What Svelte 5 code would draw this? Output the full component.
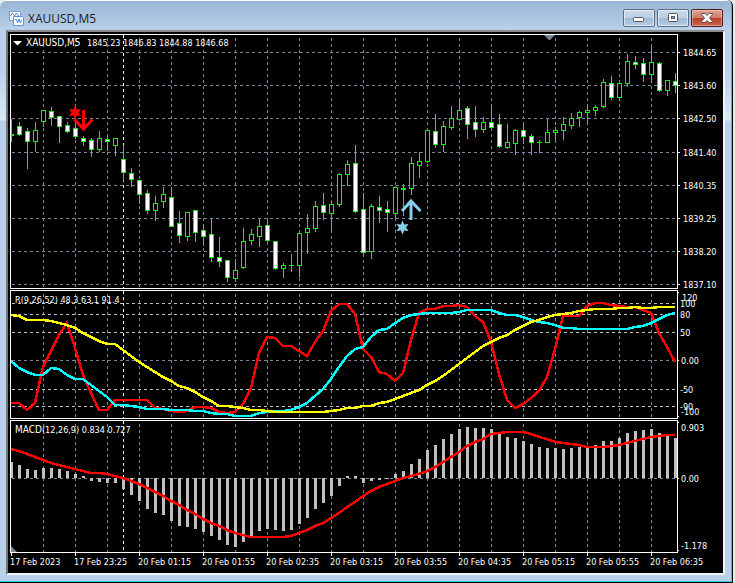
<script lang="ts">
    type Candle = [high: number, top: number, bottom: number, low: number, bear: number];

    // chart space: one bar every 8 units, y grows downwards
    const START = 11;
    const STEP = 8;
    const LEFT = 10;
    const RIGHT = 677;

    const panes = [
        { top: 34, bottom: 288 },
        { top: 290, bottom: 418 },
        { top: 420, bottom: 552 }
    ];

    const candles: Candle[] = [
        [119, 134, 136, 142, 0], [122, 126, 135, 136, 1], [128, 131, 142, 169, 1], [122, 130, 142, 152, 0],
        [110, 110, 122, 127, 0], [107, 111, 118, 126, 1], [116, 116, 127, 143, 1], [122, 125, 132, 133, 1],
        [124, 128, 137, 139, 1], [136, 138, 142, 146, 1], [138, 140, 150, 157, 1], [131, 138, 150, 152, 0],
        [136, 139, 142, 151, 1], [138, 138, 146, 156, 0], [145, 159, 173, 181, 1], [168, 173, 180, 187, 1],
        [180, 180, 195, 204, 1], [190, 193, 211, 214, 1], [196, 203, 211, 221, 0], [187, 194, 202, 208, 0],
        [187, 197, 227, 227, 1], [211, 223, 236, 243, 1], [212, 212, 237, 241, 0], [210, 210, 233, 242, 1],
        [225, 230, 237, 246, 1], [218, 234, 258, 262, 1], [237, 257, 262, 267, 1], [260, 260, 278, 282, 1],
        [259, 270, 279, 282, 0], [228, 241, 268, 269, 0], [229, 234, 241, 245, 0], [219, 226, 237, 247, 0],
        [221, 225, 241, 242, 1], [241, 241, 269, 270, 1], [263, 265, 269, 278, 0], [254, 265, 266, 272, 0],
        [233, 233, 266, 277, 0], [214, 228, 233, 254, 0], [201, 206, 229, 232, 0], [193, 205, 213, 220, 1],
        [201, 204, 214, 230, 0], [173, 174, 205, 207, 0], [160, 164, 175, 186, 0], [145, 163, 212, 213, 1],
        [193, 209, 253, 255, 1], [204, 206, 252, 259, 0], [196, 207, 211, 223, 1], [201, 209, 213, 232, 1],
        [186, 187, 214, 220, 0], [184, 188, 190, 216, 0], [157, 163, 189, 195, 0], [152, 161, 166, 178, 0],
        [130, 130, 162, 163, 0], [114, 131, 145, 148, 1], [121, 126, 145, 152, 0], [106, 118, 128, 130, 0],
        [100, 110, 120, 121, 0], [106, 108, 125, 139, 1], [106, 122, 130, 137, 1], [117, 122, 130, 133, 0],
        [105, 122, 128, 128, 1], [114, 124, 147, 148, 1], [124, 142, 148, 149, 0], [129, 130, 144, 155, 0],
        [125, 130, 137, 144, 1], [134, 136, 143, 155, 1], [140, 142, 143, 153, 0], [119, 132, 143, 143, 0],
        [127, 130, 133, 141, 0], [117, 124, 131, 140, 0], [113, 118, 126, 129, 0], [111, 112, 118, 127, 0],
        [105, 110, 113, 125, 0], [105, 107, 111, 116, 0], [79, 82, 107, 108, 0], [76, 83, 98, 100, 1],
        [82, 83, 98, 101, 0], [54, 61, 84, 87, 0], [56, 62, 65, 69, 1], [58, 63, 75, 82, 1],
        [47, 62, 75, 83, 0], [62, 63, 91, 92, 1], [80, 80, 91, 96, 0], [73, 81, 86, 93, 1]
    ];

    const fast = [
        403, 403, 410, 403, 367, 351, 335, 323, 348, 375, 393, 410, 410, 400, 400, 400, 400, 400, 408, 409, 411,
        412, 411, 407, 407, 408, 412, 413, 412, 404, 388, 353, 337, 338, 346, 346, 351, 356, 342, 331, 311, 304,
        304, 314, 349, 357, 372, 374, 381, 373, 340, 313, 309, 309, 306, 306, 305, 307, 316, 322, 342, 374, 400,
        408, 404, 398, 391, 377, 349, 316, 316, 316, 306, 303, 303, 305, 306, 307, 307, 310, 313, 333, 347, 362
    ];
    const middle = [
        361, 368, 372, 375, 375, 368, 369, 375, 379, 379, 385, 391, 397, 405, 405, 406, 407, 409, 409, 409, 410,
        410, 410, 411, 411, 413, 414, 414, 416, 416, 416, 413, 412, 411, 411, 410, 407, 403, 396, 389, 379, 367,
        356, 349, 347, 337, 330, 329, 323, 318, 315, 314, 313, 313, 313, 313, 312, 310, 310, 310, 310, 313, 315,
        315, 317, 320, 322, 323, 325, 328, 328, 329, 329, 329, 329, 329, 329, 329, 327, 326, 323, 319, 315, 313
    ];
    const slow = [
        315, 316, 320, 320, 320, 321, 323, 325, 328, 333, 337, 341, 344, 344, 350, 356, 362, 367, 372, 377, 381,
        386, 388, 392, 397, 401, 406, 406, 407, 408, 410, 410, 411, 412, 412, 412, 412, 412, 412, 412, 411, 410,
        408, 408, 406, 406, 403, 402, 399, 396, 393, 390, 385, 381, 376, 370, 364, 358, 352, 346, 342, 338, 335,
        330, 326, 322, 320, 317, 315, 314, 313, 311, 310, 309, 309, 309, 308, 308, 307, 308, 308, 307, 307, 307
    ];

    const ZERO = 478;
    const macd = [
        462, 465, 469, 470, 468, 468, 469, 471, 474, 476, 481, 482, 483, 483, 489, 495, 501, 509, 513, 515, 521,
        526, 527, 529, 532, 536, 540, 545, 547, 542, 536, 531, 529, 530, 531, 530, 524, 518, 509, 503, 496, 486,
        476, 476, 483, 481, 480, 479, 474, 471, 464, 459, 450, 445, 439, 434, 429, 427, 428, 428, 429, 433, 437,
        438, 441, 444, 447, 448, 448, 449, 448, 447, 447, 445, 441, 441, 438, 433, 431, 430, 429, 433, 436, 438
    ];
    const signal = [
        449, 451, 454, 457, 460, 463, 465, 467, 469, 471, 473, 473, 474, 476, 478, 481, 484, 488, 492, 496, 501,
        505, 510, 514, 519, 523, 526, 530, 533, 535, 537, 537, 537, 537, 537, 536, 533, 530, 526, 523, 518, 513,
        507, 502, 496, 491, 487, 484, 481, 478, 476, 474, 471, 467, 462, 457, 452, 446, 442, 439, 434, 433, 432,
        432, 432, 434, 437, 439, 442, 443, 444, 445, 447, 447, 447, 446, 445, 443, 441, 439, 437, 436, 435, 435
    ];

    const prices = [
        { y: 52, text: '1844.65' }, { y: 85, text: '1843.60' }, { y: 118, text: '1842.50' }, { y: 152, text: '1841.40' },
        { y: 185, text: '1840.35' }, { y: 218, text: '1839.25' }, { y: 251, text: '1838.20' }, { y: 284, text: '1837.10' }
    ];
    const levels = [303, 314, 332, 389, 406];
    const scale = [
        { x: 682, y: 297, text: '120' }, { x: 680, y: 303, text: '100' }, { x: 680, y: 314, text: '80' },
        { x: 680, y: 332, text: '50' }, { x: 681, y: 360, text: '0.00' }, { x: 680, y: 389, text: '-50' },
        { x: 680, y: 406, text: '-90' }, { x: 681, y: 411, text: '-100' }, { x: 681, y: 427, text: '0.903' },
        { x: 681, y: 478, text: '0.00' }, { x: 681, y: 545, text: '-1.178' }
    ];
    const ticks = [292, 360, 416, 422, 478, 550];
    const times = [
        '17 Feb 2023', '17 Feb 23:25', '20 Feb 01:15', '20 Feb 01:55', '20 Feb 02:35', '20 Feb 03:15',
        '20 Feb 03:55', '20 Feb 04:35', '20 Feb 05:15', '20 Feb 05:55', '20 Feb 06:35'
    ];
    const columns = Array.from({ length: 20 }, (_, i) => 43 + i * 32);

    const barX = (i: number) => START + i * STEP;
    const toPoints = (ys: number[]) => ys.map((y, i) => `${barX(i)},${y}`).join(' ');

    function star(cx: number, cy: number, r: number) {
        return Array.from({ length: 12 }, (_, i) => {
            const a = (i * Math.PI) / 6;
            const d = i % 2 ? r * 0.5 : r;
            return `${(cx + d * Math.sin(a)).toFixed(1)},${(cy - d * Math.cos(a)).toFixed(1)}`;
        }).join(' ');
    }
</script>

<main class="window">
    <header class="titlebar">
        <svg class="app-icon" width="15" height="15" viewBox="0 0 15 15" aria-hidden="true">
            <path d="M.5.5h10l1 1v8H.5z" fill="#f4f9ff" stroke="#6a9fe4" />
            <path d="M1.500 5l2-3 2 3 2-3 2 3" fill="none" stroke="#5b92dc" />
            <path d="M4.500 5.500h9l1 1v8h-10z" fill="#fff" stroke="#5b92e4" />
            <path d="M6 8.500h1.500l1 3.500 1.500-4 1.500 4 1-3" fill="none" stroke="#4a87dc" />
        </svg>
        <h1>XAUUSD,M5</h1>
        <div class="controls">
            <button aria-label="Minimize">
                <svg width="12" height="10" viewBox="0 0 12 10"><rect x=".5" y="4.500" width="10" height="4" rx="1" fill="#fff" stroke="#50565f" /></svg>
            </button>
            <button aria-label="Restore">
                <svg width="12" height="10" viewBox="0 0 12 10">
                    <rect x="1.500" y=".5" width="9" height="8" rx="1" fill="#fff" stroke="#50565f" />
                    <rect x="4.500" y="3.500" width="3" height="2" fill="#9db3cc" stroke="#50565f" />
                </svg>
            </button>
            <button class="close" aria-label="Close">
                <svg width="12" height="10" viewBox="0 0 12 10">
                    <path d="M.5.5h3.500l2 2 2-2h3.500v1L8.500 5l3 3.500v1H8l-2-2-2 2H.5v-1L3.500 5l-3-3.500z" fill="#fff" stroke="#5a4a58" />
                </svg>
            </button>
        </div>
    </header>

    <section class="chart">
        <svg viewBox="8 32 715 541" role="img" aria-label="XAUUSD M5 chart">
            <defs>
                <clipPath id="plot"><rect x="11" y="35" width="666" height="517" /></clipPath>
            </defs>

            <g clip-path="url(#plot)" shape-rendering="crispEdges">
                {#each panes as pane}
                    {#each columns as x}
                        <line class="grid" x1={x + 0.5} x2={x + 0.5} y1={pane.top + 4} y2={pane.bottom} />
                    {/each}
                    <line class="grid day" x1="123.5" x2="123.5" y1={pane.top + 1} y2={pane.bottom} />
                {/each}
                {#each prices as p}
                    <line class="grid" x1="12" x2={RIGHT} y1={p.y + 0.5} y2={p.y + 0.5} />
                {/each}
                {#each levels as y}
                    <line class="grid level" x1="12" x2={RIGHT} y1={y + 0.5} y2={y + 0.5} />
                {/each}
                <line class="grid" x1="12" x2={RIGHT} y1="360.5" y2="360.5" />
                <line class="grid" x1="12" x2={RIGHT} y1={ZERO + 0.5} y2={ZERO + 0.5} />

                {#each candles as [high, top, bottom, low, bear], i}
                    <rect class="candle" x={barX(i)} y={high} width="1" height={low - high} />
                    <rect class="candle" x={barX(i) - 2} y={top} width="5" height={bottom - top} />
                    {#if bottom - top > 2}
                        <rect class="body" class:bear={bear === 1} x={barX(i) - 1} y={top + 1} width="3" height={bottom - top - 2} />
                    {/if}
                {/each}

                <polyline class="curve red" points={toPoints(fast)} />
                <polyline class="curve cyan" points={toPoints(middle)} />
                <polyline class="curve yellow" points={toPoints(slow)} />

                {#each macd as y, i}
                    <rect class="bar" x={barX(i) - 1} y={Math.min(y, ZERO)} width="3" height={Math.abs(y - ZERO)} />
                {/each}
                <polyline class="curve red" points={toPoints(signal)} />
            </g>

            <g class="frame" shape-rendering="crispEdges">
                {#each panes as pane}
                    <rect x={LEFT + 0.5} y={pane.top + 0.5} width={RIGHT - LEFT} height={pane.bottom - pane.top} />
                {/each}
                {#each prices as p}
                    <line x1="678" x2="680" y1={p.y + 0.5} y2={p.y + 0.5} />
                {/each}
                {#each ticks as y}
                    <line x1="678" x2="679" y1={y + 0.5} y2={y + 0.5} />
                {/each}
                {#each times as _, i}
                    <line x1={START + i * 64 + 0.5} x2={START + i * 64 + 0.5} y1="553" y2="556" />
                {/each}
            </g>

            <!-- trade signals -->
            <polygon points={star(75, 112.5, 7)} fill="#f00" />
            <path d="M83.500 110v19M74.500 119.500l9 9.500 9-9.500" fill="none" stroke="#f00" stroke-width="3" />
            <polygon points={star(402.5, 227.5, 7)} fill="#87ceeb" />
            <path d="M411 220v-19M402 211l9-10 9.500 10" fill="none" stroke="#87ceeb" stroke-width="3" />

            <path d="M544 35h11l-5.500 5.500z" fill="#778899" />
            <path d="M11 546l6 6h-6z" fill="#778899" />
            <path d="M13 41h9l-4.500 4.500z" fill="#fff" />

            <g class="labels">
                <text class="symbol" x="26" y="46">XAUUSD,M5</text>
                <text x="87" y="46">1845.23 1846.83 1844.88 1846.68</text>
                <text x="15" y="303">R(9,26,52) 48.3 63.1 91.4</text>
                <text x="15" y="433"><tspan class="symbol">MACD</tspan>(12,26,9) 0.834 0.727</text>
                {#each prices as p}
                    <text x="683" y={p.y + 4}>{p.text}</text>
                {/each}
                {#each scale as s}
                    <text x={s.x} y={s.y + 4}>{s.text}</text>
                {/each}
                {#each times as time, i}
                    <text x={LEFT + i * 64} y="565">{time}</text>
                {/each}
            </g>
        </svg>
    </section>
</main>

<style>
    :global(body) {
        margin: 0;
        background: #e9e9e9;
    }
    .window {
        box-sizing: border-box;
        margin-right: 2px;
        padding: 0 7px 7px 6px;
        border-right: 1px solid #000;
        border-bottom: 1px solid #000;
        border-radius: 6px 6px 0 0;
        background: linear-gradient(#98b4d2 0, #b9d1ea 30px, #b9d1ea 70px, #dbe8f6 120px, #bad1ea 121px);
        box-shadow: inset -1px -1px 0 #2cc4e0, inset 0 1px 0 #fff;
    }
    .titlebar {
        display: flex;
        align-items: center;
        height: 30px;
        box-sizing: border-box;
        padding: 6px 2px 0 3px;
        gap: 4px;
    }
    .app-icon { display: block; }
    h1 {
        flex: 1;
        margin: 0;
        font: 400 12px 'Open Sans', 'Noto Sans', sans-serif;
        color: #1b1b1b;
    }
    .controls {
        display: flex;
        gap: 2px;
    }
    button {
        display: flex;
        align-items: center;
        justify-content: center;
        width: 32px;
        height: 18px;
        padding: 0;
        border: 1px solid #596e88;
        border-radius: 2px;
        background: linear-gradient(#c9d9ea 0, #bccfe4 50%, #9fb8d2 50%, #b6cde5 100%);
        box-shadow: inset 0 0 0 1px rgba(255, 255, 255, 0.55);
    }
    .close {
        border-color: #501d25;
        background: linear-gradient(#dfa090 0, #d17d6c 50%, #b73c28 50%, #cb6547 100%);
        box-shadow: inset 0 0 0 1px rgba(255, 255, 255, 0.35);
    }
    .chart {
        border: 2px solid;
        border-color: #8c8c8c #f4f4f4 #f4f4f4 #747474;
        background: #000;
    }
    .chart svg {
        display: block;
        width: 100%;
    }
    .grid {
        stroke: #778899;
        stroke-dasharray: 3 3;
    }
    .day { stroke: #fff; }
    .level { stroke: #c0c0c0; }
    .candle { fill: #0f0; }
    .body { fill: #000; }
    .body.bear { fill: #fff; }
    .bar { fill: #c0c0c0; }
    .curve {
        fill: none;
        stroke-width: 2.5;
    }
    .red { stroke: #f00; }
    .cyan { stroke: #0ff; }
    .yellow { stroke: #ff0; }
    .frame {
        fill: none;
        stroke: #fff;
    }
    .labels {
        fill: #fff;
        font: 9px 'DejaVu Sans Condensed', 'DejaVu Sans', sans-serif;
    }
    .symbol { font-size: 10px; }
</style>
